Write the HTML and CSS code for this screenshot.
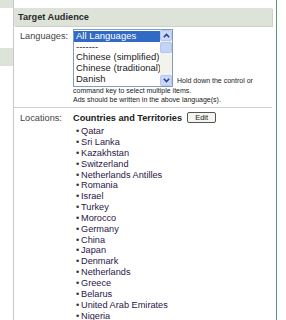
FILE: index.html
```html
<!DOCTYPE html>
<html lang="en">
<head>
    <meta charset="UTF-8">
    <title>Target Audience</title>
    <link rel="stylesheet" href="styles.css">
</head>
<body>
    <div class="page">
        <div class="side">
            <div class="side-top"></div>
            <div class="side-gap"></div>
            <div class="side-tab"></div>
        </div>

        <div class="main">
            <div class="prev-row"></div>

            <h2 class="section-title">Target Audience</h2>

            <div class="row">
                <div class="label">Languages:</div>
                <div class="field">
                    <div class="lang-field">
                        <div class="listbox">
                            <ul class="options">
                                <li class="selected">All Languages</li>
                                <li>-------</li>
                                <li>Chinese (simplified)</li>
                                <li>Chinese (traditional)</li>
                                <li>Danish</li>
                            </ul>
                            <div class="scrollbar">
                                <div class="scroll-btn">
                                    <svg width="7" height="5" viewBox="0 0 7 5"><path d="M0.8 4.2 L3.5 1.5 L6.2 4.2" fill="none" stroke="#2a3f8f" stroke-width="1.6"/></svg>
                                </div>
                                <div class="scroll-thumb"></div>
                                <div class="scroll-track"></div>
                                <div class="scroll-btn">
                                    <svg width="7" height="5" viewBox="0 0 7 5"><path d="M0.8 0.8 L3.5 3.5 L6.2 0.8" fill="none" stroke="#2a3f8f" stroke-width="1.6"/></svg>
                                </div>
                            </div>
                        </div>
                        <span class="hint">Hold down the control or</span>
                    </div>
                    <p class="hint hint-block">command key to select multiple items.<br>Ads should be written in the above language(s).</p>
                </div>
            </div>

            <div class="row row-locations">
                <div class="label">Locations:</div>
                <div class="field">
                    <div class="loc-head">
                        <span class="loc-title">Countries and Territories</span>
                        <button class="edit-btn">Edit</button>
                    </div>
                    <ul class="loc-list">
                        <li>Qatar</li>
                        <li>Sri Lanka</li>
                        <li>Kazakhstan</li>
                        <li>Switzerland</li>
                        <li>Netherlands Antilles</li>
                        <li>Romania</li>
                        <li>Israel</li>
                        <li>Turkey</li>
                        <li>Morocco</li>
                        <li>Germany</li>
                        <li>China</li>
                        <li>Japan</li>
                        <li>Denmark</li>
                        <li>Netherlands</li>
                        <li>Greece</li>
                        <li>Belarus</li>
                        <li>United Arab Emirates</li>
                        <li>Nigeria</li>
                    </ul>
                </div>
            </div>
        </div>
    </div>
</body>
</html>
```

FILE: styles.css
```css
body {
    margin: 0;
    font-family: "Liberation Sans", Arial, sans-serif;
    font-size: 9.2px;
    color: #333;
    background: #fff;
    overflow: hidden;
}
.page {
    display: flex;
    height: 320px;
}
.side {
    width: 13px;
    border-right: 1px solid #c9c9c9;
    display: flex;
    flex-direction: column;
}
.side-top {
    height: 8px;
    background: #dde3d9;
}
.side-gap {
    height: 40px;
}
.side-tab {
    height: 18px;
    background: #dde3d9;
}
.main {
    width: 258px;
    padding-right: 4px;
    border-right: 1px solid #5f9677;
}
.prev-row {
    height: 8px;
}
.section-title {
    margin: 0;
    height: 18px;
    line-height: 18px;
    padding-left: 4px;
    font-size: 9.2px;
    font-weight: bold;
    color: #2a2a2a;
    background: #dde3d9;
    box-shadow: 1px 1px 0 #cbd0c9;
}
.row {
    display: grid;
    grid-template-columns: 59px 1fr;
}
.row .label {
    padding-left: 6px;
    padding-top: 5px;
    line-height: 10px;
    color: #444;
}
.field {
    padding-top: 3px;
}
.lang-field {
    display: flex;
    align-items: flex-end;
    gap: 4px;
}
.listbox {
    width: 98px;
    height: 56px;
    border: 1px solid #7f9db9;
    display: flex;
    background: #fff;
}
.options {
    flex: 1;
    list-style: none;
    margin: 0;
    padding: 1px 0 0 0;
    font-size: 9.5px;
    line-height: 10.7px;
    color: #222;
    white-space: nowrap;
    overflow: hidden;
}
.options li {
    padding-left: 2px;
}
.options .selected {
    background: #316ac5;
    color: #fff;
}
.scrollbar {
    width: 12px;
    display: flex;
    flex-direction: column;
    background: #f3f3ee;
}
.scroll-btn {
    height: 11px;
    background: #c9d8f8;
    border: 1px solid #b4c8f0;
    border-radius: 2px;
    box-sizing: border-box;
    display: flex;
    align-items: center;
    justify-content: center;
}
.scroll-thumb {
    height: 11px;
    margin-top: 1px;
    background: #c4d4f7;
    border: 1px solid #b0c4ee;
    border-radius: 2px;
    box-sizing: border-box;
}
.scroll-track {
    flex: 1;
}
.hint {
    font-size: 7px;
    line-height: 8.6px;
    color: #222;
}
.lang-field .hint {
    margin-bottom: 1px;
}
.hint-block {
    margin: 0;
    padding-bottom: 3px;
}
.row-locations {
    border-top: 1px solid #cfcfcf;
}
.row-locations .field {
    padding-top: 4px;
}
.loc-head {
    display: flex;
    align-items: center;
    gap: 5px;
    height: 11px;
}
.loc-title {
    font-weight: bold;
    color: #222;
}
.edit-btn {
    width: 29px;
    height: 11px;
    padding: 0;
    font-family: "Liberation Sans", Arial, sans-serif;
    font-size: 7.5px;
    line-height: 9px;
    color: #222;
    background: #f4f4f0;
    border: 1px solid #555;
    border-radius: 2px;
}
.loc-list {
    list-style: none;
    margin: 3px 0 0 0;
    padding: 0 0 0 3px;
    line-height: 10.85px;
    color: #2c1548;
}
.loc-list li::before {
    content: "\2022";
    display: inline-block;
    width: 5px;
    color: #333;
}
```
